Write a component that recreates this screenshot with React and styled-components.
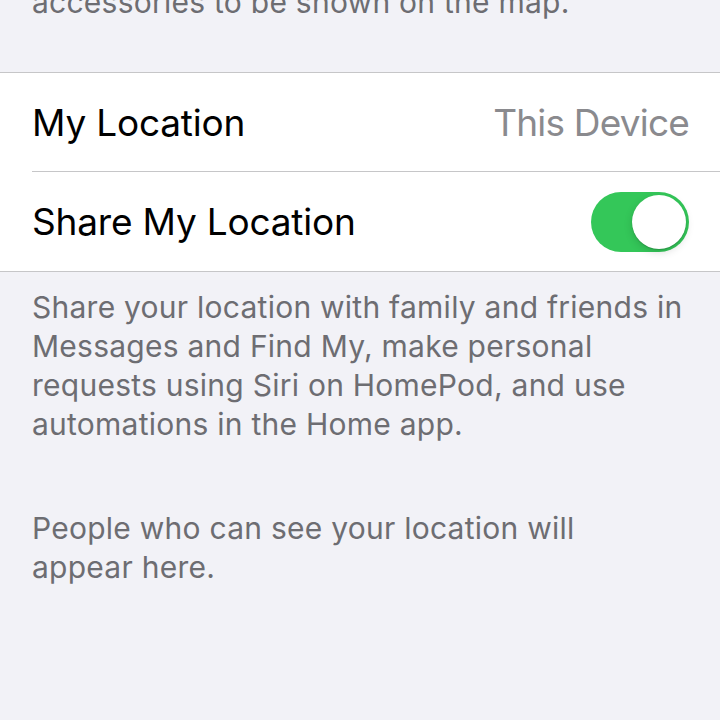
import styled, { createGlobalStyle } from "styled-components";

const GlobalStyle = createGlobalStyle`
  html, body {
    margin: 0;
    padding: 0;
    background: #f2f2f7;
  }
  body {
    font-family: Inter, "Liberation Sans", Arial, sans-serif;
    -webkit-font-smoothing: antialiased;
  }
`;

const Screen = styled.div`
  width: 720px;
  height: 720px;
  overflow: hidden;
  background: #f2f2f7;
  display: flex;
  flex-direction: column;
`;

const Footer = styled.p`
  margin: ${(p) => p.$margin || "0"};
  padding: 0 32px;
  font-size: 30px;
  line-height: 39px;
  color: #6d6d72;
  letter-spacing: 0.25px;
`;

const Group = styled.div`
  background: #ffffff;
  border-top: 1px solid #c6c6c8;
  border-bottom: 1px solid #c6c6c8;
  display: flex;
  flex-direction: column;
`;

const Row = styled.div`
  display: flex;
  padding-left: 32px;

  &:last-child > div {
    border-bottom: none;
  }
`;

const RowInner = styled.div`
  flex: 1;
  height: 99px;
  box-sizing: border-box;
  display: flex;
  align-items: center;
  justify-content: space-between;
  padding-right: 31px;
  border-bottom: 1px solid #c6c6c8;
`;

const Label = styled.span`
  font-size: 37px;
  color: #000000;
  letter-spacing: -0.2px;
`;

const Value = styled.span`
  font-size: 37px;
  color: #8a8a8e;
  letter-spacing: -0.8px;
`;

const Toggle = styled.div`
  width: 98px;
  height: 60px;
  border-radius: 30px;
  background: ${(p) => (p.$on ? "#34c759" : "#e9e9ea")};
  display: flex;
  align-items: center;
  justify-content: ${(p) => (p.$on ? "flex-end" : "flex-start")};
  padding: 3px;
  box-sizing: border-box;
`;

const Knob = styled.div`
  width: 54px;
  height: 54px;
  border-radius: 50%;
  background: #ffffff;
  box-shadow: 0 3px 8px rgba(0, 0, 0, 0.15), 0 1px 1px rgba(0, 0, 0, 0.16);
`;

export default function App() {
  return (
    <>
      <GlobalStyle />
      <Screen>
        <Footer $margin="-17px 0 50px">accessories to be shown on the map.</Footer>
        <Group>
          <Row>
            <RowInner>
              <Label>My Location</Label>
              <Value>This Device</Value>
            </RowInner>
          </Row>
          <Row>
            <RowInner>
              <Label>Share My Location</Label>
              <Toggle $on>
                <Knob />
              </Toggle>
            </RowInner>
          </Row>
        </Group>
        <Footer $margin="16px 0 0">
          Share your location with family and friends in
          <br />
          Messages and Find My, make personal
          <br />
          requests using Siri on HomePod, and use
          <br />
          automations in the Home app.
        </Footer>
        <Footer $margin="65px 0 0">
          People who can see your location will
          <br />
          appear here.
        </Footer>
      </Screen>
    </>
  );
}
